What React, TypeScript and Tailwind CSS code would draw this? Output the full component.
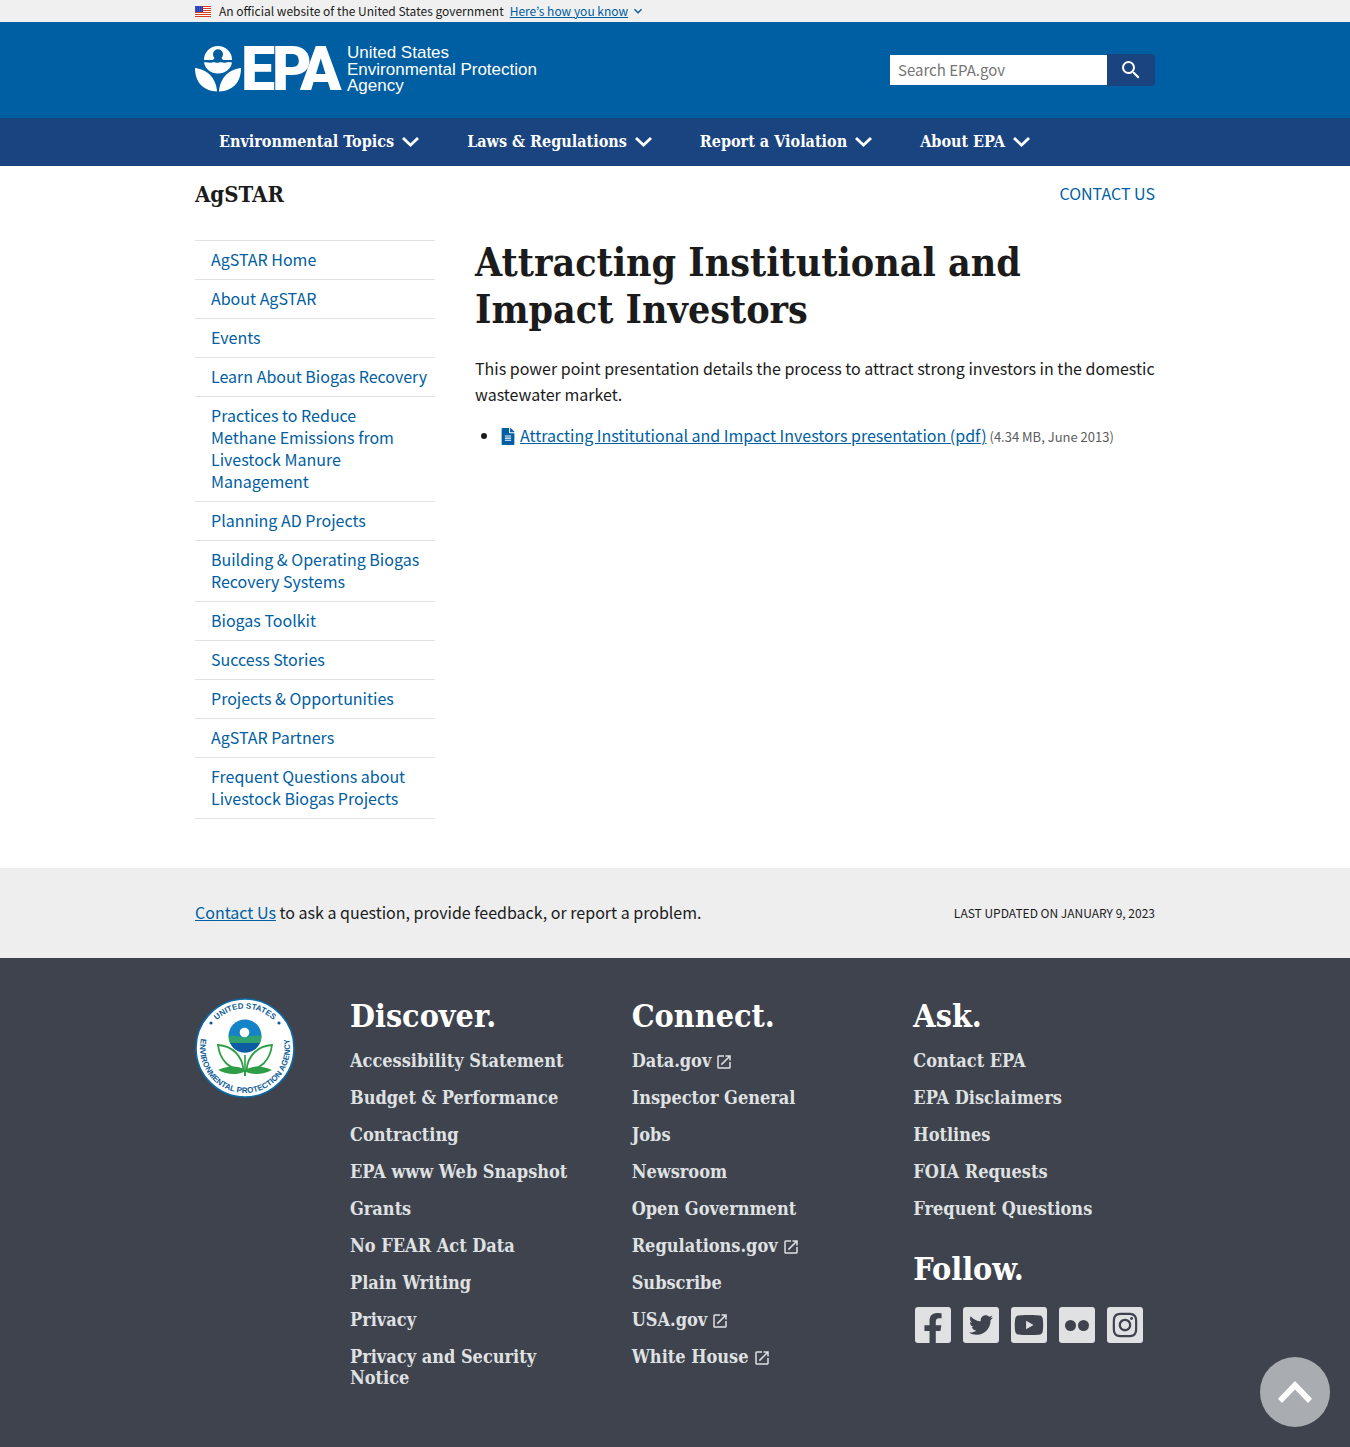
import React from "react";
import { FaFacebookF, FaTwitter, FaYoutube, FaInstagram, FaFileAlt } from "react-icons/fa";
import { MdLaunch, MdSearch, MdExpandMore } from "react-icons/md";

const SANS = "font-['Noto_Sans_CJK_JP','Noto_Sans_CJK_SC',sans-serif]";
const SERIF = "font-['DejaVu_Serif_Condensed','DejaVu_Serif',serif]";

function Chevron({ className }: { className: string }) {
  return (
    <svg viewBox="6 8.59 12 7.41" preserveAspectRatio="none" className={className} fill="currentColor" aria-hidden="true">
      <path d="M16.59 8.59 12 13.17 7.41 8.59 6 10l6 6 6-6z" />
    </svg>
  );
}

function Flag() {
  return (
    <svg viewBox="0 0 16 11" className="h-[11px] w-4" aria-hidden="true">
      <rect width="16" height="11" fill="#fff" />
      {[0, 2, 4, 6, 8, 10].map((y) => (
        <rect key={y} y={y} width="16" height="1" fill="#db3e1f" />
      ))}
      <rect width="8" height="6" fill="#1e33b1" />
      {[1, 3, 5].map((y) =>
        [1, 3, 5, 7].map((x) => <circle key={`${x}-${y}`} cx={x - 0.2} cy={y - 0.1} r="0.45" fill="#fff" />)
      )}
    </svg>
  );
}

function Logo() {
  return (
    <svg viewBox="0 0 350 52" className="h-[52px] w-[350px] overflow-visible" role="img" aria-label="United States Environmental Protection Agency">
      <g fill="#fff">
        <path d="M9 16A14 14 0 0 1 37 16H28C27.500 15 26.500 15 26.600 13.800A5 5 0 1 0 19.400 13.800C19.500 15 18.500 15 18 16Z" />
        <path d="M9 18.500C12 17.500 14 19.500 17 18.500S21 19.500 24 18.500S29 19.500 31 18.500S35 18 37 18.500C36 25 30 29.500 23 29.500S10 25 9 18.500Z" />
        <path d="M0 24C10 25 21 32 22 47.500C9 47 0 39 0 24Z" />
        <path d="M46 24C36 25 25 32 24 47.500C37 47 46 39 46 24Z" />
      </g>
      <g fill="#fff" fontFamily="Roboto, 'Liberation Sans', sans-serif" fontWeight="900" fontSize="61">
        <text x="46" y="46">E</text>
        <text x="77" y="46">P</text>
        <text x="105" y="46">A</text>
      </g>
      <g fill="#fff" fontFamily="'Liberation Sans', Arial, sans-serif" fontSize="17">
        <text x="152" y="14">United States</text>
        <text x="152" y="31">Environmental Protection</text>
        <text x="152" y="47">Agency</text>
      </g>
    </svg>
  );
}

function Seal() {
  return (
    <svg viewBox="0 0 100 100" className="size-[100px]" role="img" aria-label="U.S. EPA seal">
      <circle cx="50" cy="50" r="49" fill="#fff" stroke="#0a6ba8" strokeWidth="1.6" />
      <defs>
        <path id="seal-top" d="M10.500 50A39.500 39.500 0 0 1 89.500 50" />
        <path id="seal-ring" d="M18.200 18.200A45 45 0 1 0 81.800 18.200" />
        <clipPath id="seal-disc">
          <circle cx="50" cy="38" r="16.5" />
        </clipPath>
      </defs>
      <g fill="#0f5d96" fontFamily="'Liberation Sans', Arial, sans-serif" fontWeight="700" fontSize="8">
        <text textAnchor="middle">
          <textPath href="#seal-top" startOffset="50%">UNITED STATES</textPath>
        </text>
        <text textAnchor="middle">
          <textPath href="#seal-ring" startOffset="50%">ENVIRONMENTAL PROTECTION AGENCY</textPath>
        </text>
      </g>
      <circle cx="16" cy="25" r="1.6" fill="#0f5d96" />
      <circle cx="84" cy="25" r="1.6" fill="#0f5d96" />
      <g clipPath="url(#seal-disc)">
        <rect x="33" y="21" width="34" height="34" fill="#1583c6" />
        <path d="M33 39Q38 37 43 38.500T54 38.500T67 38V46H33Z" fill="#2ea36f" />
        <path d="M33 45H67V56H33Z" fill="#0d5ba3" />
      </g>
      <circle cx="49.500" cy="34.500" r="4.800" fill="#fff" />
      <g fill="#fff" stroke="#2e9e46" strokeWidth="1.800">
        <path d="M48.500 72C35 72 25 63 23 47C37 48 47 57 48.500 72Z" />
        <path d="M51.500 72C65 72 75 63 77 47C63 48 53 57 51.500 72Z" />
      </g>
      <path d="M50 72C42 67 32 68 23 72C32 77 42 77 49 74V78H51V74C58 77 68 77 77 72C68 68 58 67 50 72Z" fill="#2e9e46" />
      <path d="M50 57V78" stroke="#2e9e46" strokeWidth="1.600" fill="none" />
    </svg>
  );
}

const navItems = ["Environmental Topics", "Laws & Regulations", "Report a Violation", "About EPA"];

const sideItems = [
  "AgSTAR Home",
  "About AgSTAR",
  "Events",
  "Learn About Biogas Recovery",
  "Practices to Reduce\nMethane Emissions from\nLivestock Manure\nManagement",
  "Planning AD Projects",
  "Building & Operating Biogas\nRecovery Systems",
  "Biogas Toolkit",
  "Success Stories",
  "Projects & Opportunities",
  "AgSTAR Partners",
  "Frequent Questions about\nLivestock Biogas Projects",
];

type FooterLink = { label: string; external?: boolean };

const discover: FooterLink[] = [
  { label: "Accessibility Statement" },
  { label: "Budget & Performance" },
  { label: "Contracting" },
  { label: "EPA www Web Snapshot" },
  { label: "Grants" },
  { label: "No FEAR Act Data" },
  { label: "Plain Writing" },
  { label: "Privacy" },
  { label: "Privacy and Security Notice" },
];

const connect: FooterLink[] = [
  { label: "Data.gov", external: true },
  { label: "Inspector General" },
  { label: "Jobs" },
  { label: "Newsroom" },
  { label: "Open Government" },
  { label: "Regulations.gov", external: true },
  { label: "Subscribe" },
  { label: "USA.gov", external: true },
  { label: "White House", external: true },
];

const ask: FooterLink[] = [
  { label: "Contact EPA" },
  { label: "EPA Disclaimers" },
  { label: "Hotlines" },
  { label: "FOIA Requests" },
  { label: "Frequent Questions" },
];

function FooterColumn({ title, links }: { title: string; links: FooterLink[] }) {
  return (
    <section>
      <h2 className={`${SERIF} text-[32px] leading-9 font-bold text-white`}>{title}</h2>
      <ul className="mt-4 flex flex-col gap-4">
        {links.map((l) => (
          <li key={l.label} className={`${SERIF} text-[18px] leading-[21px] font-bold text-[#dfe1e2]`}>
            <a href="#">
              {l.label}
              {l.external && <MdLaunch className="ml-1 inline size-[18px] align-[-4px]" />}
            </a>
          </li>
        ))}
      </ul>
    </section>
  );
}

function SocialLink({ label, children }: { label: string; children: React.ReactNode }) {
  return (
    <a
      href="#"
      aria-label={label}
      className="flex size-9 items-center justify-center overflow-hidden rounded-[3px] bg-[#dfe1e2] text-[#3f434e]"
    >
      {children}
    </a>
  );
}

export default function App() {
  return (
    <div className={`${SANS} bg-white text-[16px] text-[#1b1b1b]`}>
      <div className="bg-[#f0f0f0]">
        <div className="mx-auto flex h-[22px] max-w-5xl items-center px-8 text-[12px] leading-4">
          <Flag />
          <span className="ml-2">An official website of the United States government</span>
          <button type="button" className="ml-1.5 flex items-center text-[#005ea2]">
            <span className="underline">Here’s how you know</span>
            <MdExpandMore className="ml-0.5 size-4" />
          </button>
        </div>
      </div>

      <header>
        <div className="bg-[#005ea2]">
          <div className="mx-auto flex h-24 max-w-5xl items-center justify-between px-8">
            <a href="#">
              <Logo />
            </a>
            <form className="flex h-8 items-center" onSubmit={(e) => e.preventDefault()}>
              <input
                type="search"
                aria-label="Search"
                placeholder="Search EPA.gov"
                className="h-[30px] w-[217px] bg-white px-2 pb-0.5 text-[15px] outline-none placeholder:text-[#757575]"
              />
              <button type="submit" aria-label="Search" className="flex h-8 w-12 items-center justify-center rounded-r bg-[#1a4480] text-white">
                <MdSearch className="size-6" />
              </button>
            </form>
          </div>
        </div>
        <nav className="bg-[#1a4480]" aria-label="Primary">
          <ul className="mx-auto flex h-12 max-w-5xl px-8">
            {navItems.map((n) => (
              <li key={n}>
                <button type="button" className={`${SERIF} flex h-full items-center px-6 text-[16px] font-bold text-white`}>
                  {n}
                  <Chevron className="ml-2 h-2.5 w-[17px]" />
                </button>
              </li>
            ))}
          </ul>
        </nav>
      </header>

      <div className="mx-auto max-w-5xl px-8 pt-3.5 pb-[49px]">
        <div className="flex items-start justify-between">
          <h2 className={`${SERIF} text-[22px] leading-7 font-bold`}>AgSTAR</h2>
          <a href="#" className="leading-[26px] text-[#005ea2]">CONTACT US</a>
        </div>
        <div className="mt-8 flex">
          <nav className="w-60 shrink-0" aria-label="Side navigation">
            <ul className="border-b border-[#dfe1e2]">
              {sideItems.map((s) => (
                <li key={s} className="border-t border-[#dfe1e2]">
                  <a href="#" className="block pt-[7px] pr-1 pb-[9px] pl-4 leading-[22px] whitespace-pre-line text-[#005ea2]">{s}</a>
                </li>
              ))}
            </ul>
          </nav>
          <main className="-mt-px -mr-2 grow pl-10">
            <h1 className={`${SERIF} max-w-[620px] text-[39px] leading-[47px] font-bold`}>
              Attracting Institutional and Impact Investors
            </h1>
            <p className="mt-[22px] leading-[26px]">
              This power point presentation details the process to attract strong investors in the domestic wastewater market.
            </p>
            <ul className="mt-[15px] list-disc pl-[25px] leading-[26px]">
              <li>
                <a href="#" className="text-[#005ea2]">
                  <FaFileAlt className="mr-1 inline h-[17px] w-4 align-[-3px]" />
                  <span className="underline">Attracting Institutional and Impact Investors presentation (pdf)</span>
                </a>
                <span className="text-[13px] text-[#5c5c5c]"> (4.34 MB, June 2013)</span>
              </li>
            </ul>
          </main>
        </div>
      </div>

      <footer>
        <div className="bg-[#eeeeef]">
          <div className="mx-auto flex h-[90px] max-w-5xl items-center justify-between px-8">
            <p className="pb-0.5">
              <a href="#" className="text-[#005ea2] underline">Contact Us</a> to ask a question, provide feedback, or report a problem.
            </p>
            <span className="text-[12px]">LAST UPDATED ON JANUARY 9, 2023</span>
          </div>
        </div>
        <div className="bg-[#3f434e]">
          <div className="mx-auto flex max-w-5xl px-8 pt-10 pb-[60px]">
            <div className="w-[155px] shrink-0">
              <Seal />
            </div>
            <div className="grid grow grid-cols-3 gap-10">
              <FooterColumn title="Discover." links={discover} />
              <FooterColumn title="Connect." links={connect} />
              <div>
                <FooterColumn title="Ask." links={ask} />
                <h2 className={`${SERIF} mt-8 text-[32px] leading-9 font-bold text-white`}>Follow.</h2>
                <div className="mt-5 ml-0.5 flex gap-3">
                  <SocialLink label="Facebook">
                    <FaFacebookF className="mt-2 h-8 w-8" />
                  </SocialLink>
                  <SocialLink label="Twitter">
                    <FaTwitter className="size-6" />
                  </SocialLink>
                  <SocialLink label="YouTube">
                    <FaYoutube className="size-[30px]" />
                  </SocialLink>
                  <SocialLink label="Flickr">
                    <span className="flex gap-0.5">
                      <span className="size-[11px] rounded-full bg-[#3f434e]" />
                      <span className="size-[11px] rounded-full bg-[#3f434e]" />
                    </span>
                  </SocialLink>
                  <SocialLink label="Instagram">
                    <FaInstagram className="size-7" />
                  </SocialLink>
                </div>
              </div>
            </div>
          </div>
        </div>
      </footer>

      <button
        type="button"
        aria-label="Back to top"
        className="fixed right-5 bottom-5 flex size-[70px] items-center justify-center rounded-full bg-[#a9acb1] text-white"
      >
        <Chevron className="h-[22px] w-[34px] rotate-180" />
      </button>
    </div>
  );
}
